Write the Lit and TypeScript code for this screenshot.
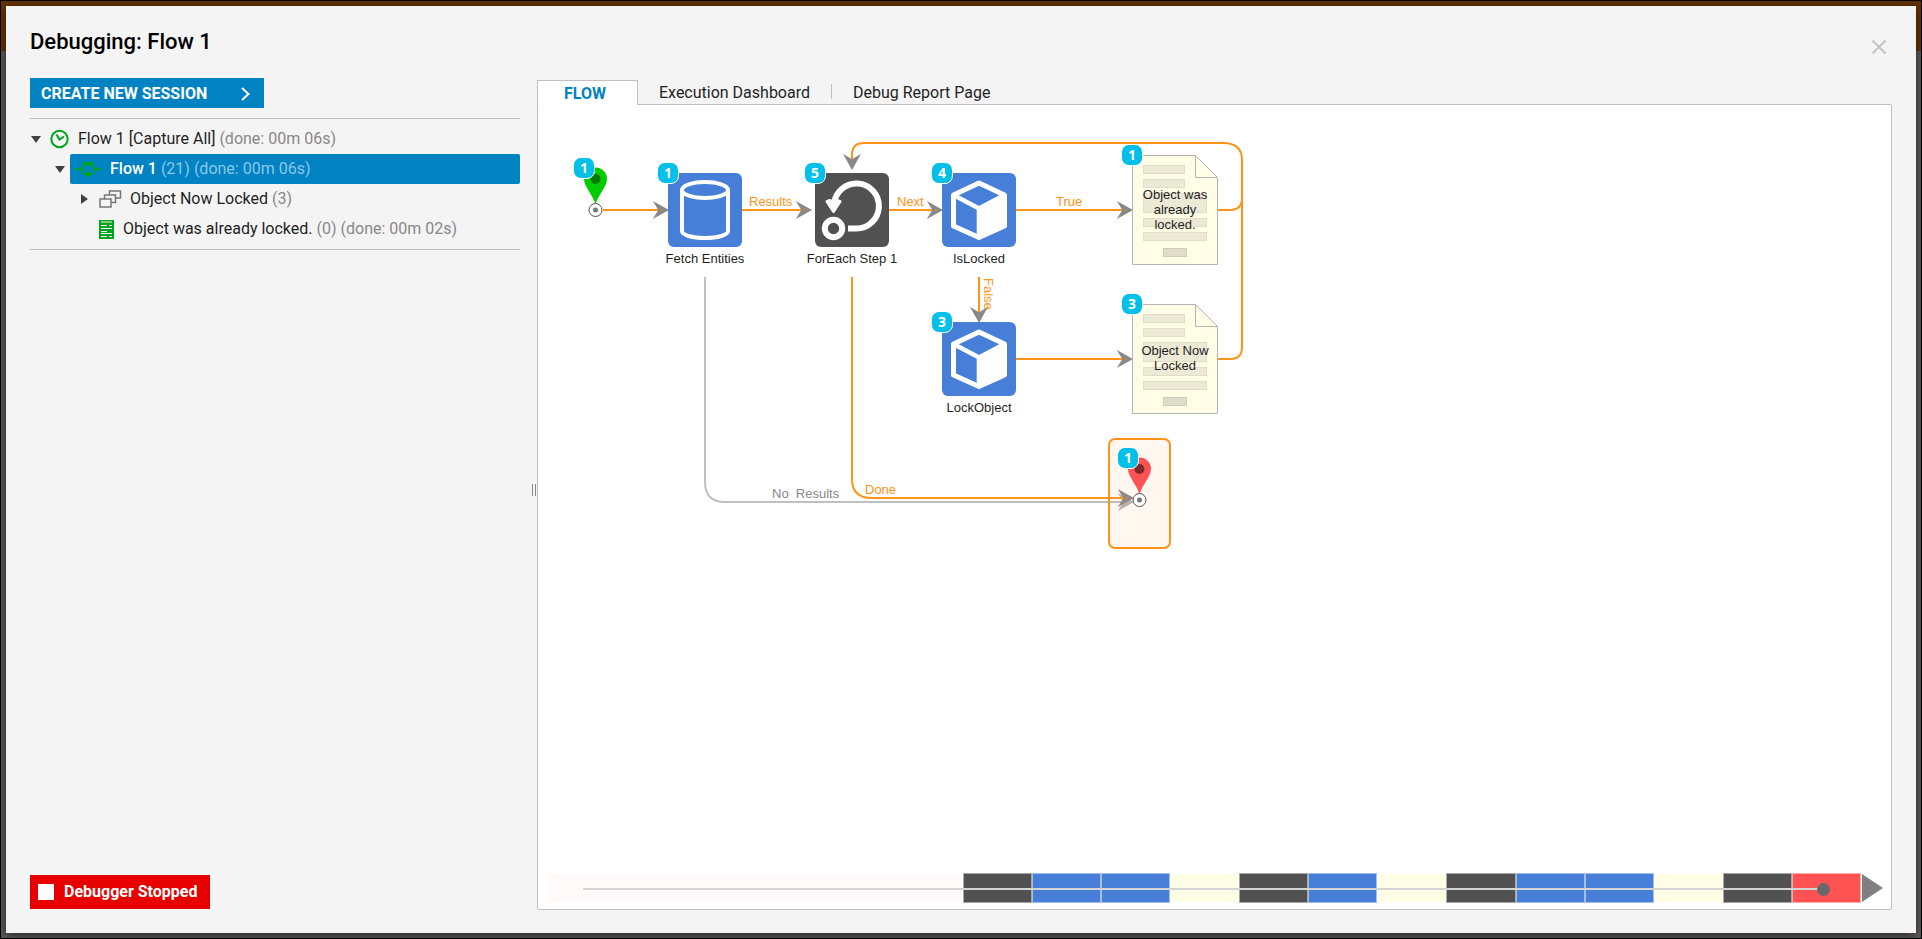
import { LitElement, html, css, svg } from "lit";
import { customElement } from "lit/decorators.js";
import { classMap } from "lit/directives/class-map.js";
import { styleMap } from "lit/directives/style-map.js";

type Kind = "data" | "loop" | "cube" | "form" | "start" | "end";

interface FlowNode {
  kind: Kind;
  x: number;
  y: number;
  label: string;
  runs: number;
}

const nodes: FlowNode[] = [
  { kind: "start", x: 46, y: 62, label: "", runs: 1 },
  { kind: "data", x: 130, y: 68, label: "Fetch Entities", runs: 1 },
  { kind: "loop", x: 277, y: 68, label: "ForEach Step 1", runs: 5 },
  { kind: "cube", x: 404, y: 68, label: "IsLocked", runs: 4 },
  { kind: "cube", x: 404, y: 217, label: "LockObject", runs: 3 },
  { kind: "form", x: 594, y: 50, label: "Object was already locked.", runs: 1 },
  { kind: "form", x: 594, y: 199, label: "Object Now Locked", runs: 3 },
  { kind: "end", x: 570, y: 333, label: "", runs: 1 },
];

const timeline = [
  "idle", "loop", "cube", "cube", "form", "loop", "cube", "form",
  "loop", "cube", "cube", "form", "loop", "stop",
];

const glyph = {
  data: svg`<g fill="none" stroke="#fff" stroke-width="4">
    <ellipse cx="37" cy="17" rx="23" ry="8"/>
    <path d="M14 17V58c0 4 10 7 23 7s23-3 23-7V17"/></g>`,
  loop: svg`<g fill="none" stroke="#fff" stroke-width="6">
    <circle cx="18.5" cy="55.5" r="8.7"/>
    <path d="M33 55.5H41A22.5 22.5 0 1 0 19 31V35"/></g>
    <path d="M12 28.500L18.500 38.500 25 28.500 22 27.500 18.500 30 15 27.500Z" fill="#fff" stroke="#fff" stroke-width="3" stroke-linejoin="round"/>`,
  cube: svg`<path d="M37 10L62.500 22V53L37 64.500 11.500 53V22Z" fill="none" stroke="#fff" stroke-width="5" stroke-linejoin="round"/>
    <path d="M37 36L62.500 22V53L37 64.500Z" fill="#fff"/>
    <path d="M11.500 22L37 35.500 62.500 22M37 35.500V64" fill="none" stroke="#fff" stroke-width="4.600"/>`,
};

@customElement("app-root")
export class AppRoot extends LitElement {
  static styles = css`
    :host {
      display: flex;
      box-sizing: border-box;
      height: 100vh;
      padding: 5px;
      border: 1px solid #000;
      background: linear-gradient(#663300 0 50px, #5c5a5a 50px);
      font-family: Roboto, sans-serif;
      font-size: 16px;
      line-height: 20px;
      color: #1f1f1f;
    }
    * { box-sizing: border-box; }
    button { font: inherit; border: 0; cursor: pointer; }
    svg { display: block; overflow: visible; }
    .dialog {
      flex: 1;
      min-width: 0;
      display: flex;
      flex-direction: column;
      padding: 0 24px 23px;
      background: #f4f4f4;
      box-shadow: 0 2px 10px rgba(0, 0, 0, 0.6);
    }
    header {
      display: flex;
      justify-content: space-between;
      height: 72px;
    }
    h1 {
      margin: 0;
      padding-top: 21px;
      font-size: 22px;
      line-height: 30px;
      font-weight: 500;
      color: #000;
    }
    .close {
      align-self: flex-start;
      margin-top: 31px;
      padding: 3px;
      margin-right: 3px;
      background: none;
    }
    .body { flex: 1; min-height: 0; display: flex; }
    aside {
      width: 490px;
      display: flex;
      flex-direction: column;
    }
    .create {
      align-self: flex-start;
      display: flex;
      align-items: center;
      justify-content: space-between;
      width: 234px;
      height: 30px;
      margin-top: 0;
      padding: 1px 14px 0 11px;
      background: #0082c3;
      color: #fff;
      font-weight: 700;
    }
    .tree {
      list-style: none;
      margin: 10px 0 0;
      padding: 5px 0;
      border: solid #c0c0c0;
      border-width: 1px 0;
      white-space: nowrap;
    }
    .row { display: flex; align-items: center; height: 30px; }
    .twisty { width: 12px; padding: 0; background: none; }
    .item { display: flex; align-items: center; height: 30px; flex: 1; gap: 9px; }
    .item svg { flex: none; }
    .note { color: #888; }
    .d0 .item { padding-left: 8px; }
    .d1 { padding-left: 24px; }
    .d1 .item {
      margin-left: 4px;
      padding-left: 5px;
      border-radius: 2px;
      background: #0082c3;
      color: #fff;
      font-weight: 500;
    }
    .d1 .note { color: #8cc8e8; font-weight: 400; }
    .d2 { padding-left: 48px; }
    .d2 .item { padding-left: 9px; }
    .d3 { padding-left: 60px; }
    .d3 .item { padding-left: 9px; }
    .stopped {
      align-self: flex-start;
      display: flex;
      align-items: center;
      gap: 10px;
      margin: auto 0 1px;
      height: 34px;
      padding: 0 12px 0 8px;
      background: #e60000;
      color: #fff;
      font-weight: 700;
    }
    .square { width: 16px; height: 16px; background: #fff; }
    .splitter {
      width: 17px;
      padding: 0 0 8px 10px;
      display: flex;
      align-items: center;
      justify-content: center;
      gap: 2px;
    }
    .splitter i { width: 1px; height: 12px; background: #888; }
    main { flex: 1; min-width: 0; display: flex; flex-direction: column; margin-top: 2px; }
    nav { display: flex; height: 25px; margin-bottom: -1px; z-index: 1; }
    nav a { color: inherit; text-decoration: none; line-height: 26px; padding: 0 21px; }
    nav .on {
      width: 101px;
      padding: 0 0 0 26px;
      border: 1px solid #c0c0c0;
      border-bottom: 0;
      background: #fff;
      color: #0082c3;
      font-weight: 700;
    }
    nav .bar { width: 1px; height: 15px; margin-top: 4px; background: #c0c0c0; }
    .pane {
      flex: 1;
      min-height: 0;
      display: flex;
      flex-direction: column;
      border: 1px solid #c0c0c0;
      border-radius: 2px;
      background: #fff;
    }
    .canvas {
      flex: 1;
      position: relative;
      overflow: hidden;
      font-family: "Liberation Sans", Arial, sans-serif;
      font-size: 13px;
      line-height: 15px;
    }
    .edges { position: absolute; left: 0; top: 0; width: 100%; height: 100%; }
    .edge { fill: none; stroke: #ff9318; stroke-width: 2; }
    .edge.off { stroke: #c0c0c0; }
    .head { fill: #ff9318; stroke: #888; stroke-width: 3; }
    .head.off { fill: #b4b4b4; stroke: #b4b4b4; }
    .wire { fill: #ff9318; }
    .wire.off { fill: #888; }
    .node { position: absolute; }
    .label {
      position: absolute;
      top: 78px;
      left: 50%;
      transform: translateX(-50%);
      white-space: nowrap;
      color: #1f1f1f;
    }
    .data, .cube, .loop { width: 74px; height: 74px; border-radius: 6px; background: #467ed8; }
    .loop { background: #515151; }
    .form { width: 86px; height: 110px; }
    .form .label {
      inset: 0;
      transform: none;
      display: flex;
      align-items: center;
      padding: 0 6px 2px;
      text-align: center;
      white-space: normal;
    }
    .start { width: 23px; height: 50px; }
    .end {
      width: 63px;
      height: 111px;
      border: 2px solid #ff9318;
      border-radius: 7px;
      background: rgba(255, 147, 60, 0.08);
    }
    .end svg { margin: 17px 0 0 18px; }
    .badge {
      position: absolute;
      left: -11px;
      top: -11px;
      width: 22px;
      height: 22px;
      border: 1px solid #fff;
      border-radius: 8px;
      background: #00bfe8;
      color: #fff;
      font: 700 14px/19px "Noto Sans", sans-serif;
      text-align: center;
    }
    .start .badge { top: -10px; }
    .end .badge { left: 7px; top: 7px; }
    .timeline { display: flex; height: 30px; margin: 0 8px 6px 10px; position: relative; }
    .seg { flex: 1; box-shadow: inset 0 0 0 1px rgba(255, 255, 255, 0.5); }
    .idle-seg { flex: 6; background: #fffafa; }
    .cube-seg { background: #467ed8; }
    .loop-seg { background: #515151; }
    .form-seg { background: #fffde6; }
    .stop-seg { background: #ff5353; }
    .track { position: absolute; left: 35px; right: 59px; top: 15px; height: 2px; background: #d4d4d4; }
    .knob { position: absolute; right: -6px; top: -5px; width: 13px; height: 13px; border-radius: 50%; background: #686868; }
    .play { display: flex; align-items: center; padding: 0 0 0 1px; background: none; }
  `;

  private arrow(x: number, y: number, turn = 0, off = false) {
    return svg`<path class=${classMap({ head: true, off })} transform="translate(${x} ${y}) rotate(${turn})"
      d="M-3 0L-12 -5 -9 0 -12 5Z"/>`;
  }

  private pin(color: string, core: string) {
    return svg`<path d="M11.500 38C10 29 0 20 0 12a11.500 11.500 0 0 1 23 0C23 20 13 29 11.500 38Z" fill=${color}/>
      <circle cx="11.500" cy="12" r="5" fill=${core}/>
      <circle cx="11.500" cy="43" r="6.500" fill="#fff" stroke="#555"/>
      <circle cx="11.500" cy="43" r="2.500" fill="#777"/>`;
  }

  private art(kind: Kind) {
    if (kind === "start") return html`<svg width="23" height="50">${this.pin("#00cc00", "#007a00")}</svg>`;
    if (kind === "end") return html`<svg width="23" height="50">${this.pin("#ff5353", "#802929")}</svg>`;
    if (kind === "form")
      return html`<svg width="86" height="110">
        <path d="M.5 .5H63.500L85.500 22.500V109.500H.5Z" fill="#fffde6" stroke="#b4b4b4"/>
        <path d="M63.500 .5V22.500H85.500" fill="none" stroke="#b4b4b4"/>
        <g fill="#ecead6" stroke="#e0dec8">
          <rect x="11.500" y="10.500" width="41" height="8"/>
          <rect x="11.500" y="24.500" width="41" height="8"/>
          <rect x="11.500" y="38.500" width="63" height="19"/>
          <rect x="11.500" y="63.500" width="63" height="8"/>
          <rect x="11.500" y="77.500" width="63" height="8"/>
          <rect x="31.500" y="93.500" width="23" height="8" fill="#dfddca" stroke="#cfcdbb"/>
        </g></svg>`;
    return html`<svg width="74" height="74">${glyph[kind]}</svg>`;
  }

  private node(n: FlowNode) {
    return html`<div class="node ${n.kind}" style=${styleMap({ left: `${n.x}px`, top: `${n.y}px` })}>
      ${this.art(n.kind)}
      ${n.label ? html`<div class="label">${n.label}</div>` : ""}
      <div class="badge">${n.runs}</div>
    </div>`;
  }

  private edges() {
    return svg`
      <path class="edge off" d="M167 172V377Q167 397 187 397H586"/>
      ${this.arrow(596, 397, 0, true)}
      <path class="edge" d="M65 105H121M204 105H264M351 105H395M478 105H585M478 254H585M441 172V210"/>
      <path class="edge" d="M680 105H692Q704 105 704 93M680 254H692Q704 254 704 242V55Q704 38 685 38H326Q314 38 314 50V56"/>
      <path class="edge" d="M314 172V374Q314 393 334 393H586"/>
      ${this.arrow(131, 105)}${this.arrow(274, 105)}${this.arrow(405, 105)}
      ${this.arrow(595, 105)}${this.arrow(595, 254)}${this.arrow(596, 393)}
      ${this.arrow(314, 65, 90)}${this.arrow(441, 218, 90)}
      <text class="wire" x="211" y="101">Results</text>
      <text class="wire" x="359" y="101">Next</text>
      <text class="wire" x="518" y="101">True</text>
      <text class="wire" x="327" y="389">Done</text>
      <text class="wire off" x="234" y="393">No&nbsp; Results</text>
      <text class="wire" transform="translate(446 173) rotate(90)">False</text>`;
  }

  private twisty(open: boolean, name: string) {
    return html`<button class="twisty" aria-label="Toggle ${name}"><svg width="12" height="12" fill="#404040">
      <path d=${open ? "M1 3H11L6 10Z" : "M3 1V11L10 6Z"}/></svg></button>`;
  }

  render() {
    return html`<section class="dialog" role="dialog" aria-labelledby="title">
      <header>
        <h1 id="title">Debugging: Flow 1</h1>
        <button class="close" aria-label="Close"><svg width="14" height="14" stroke="#c4c4c4" stroke-width="2">
          <path d="M.5 .5L13.500 13.500M13.500 .5L.5 13.500"/></svg></button>
      </header>
      <div class="body">
        <aside>
          <button class="create">CREATE NEW SESSION
            <svg width="9" height="14" fill="none" stroke="#fff" stroke-width="2"><path d="M1 1L7.500 7 1 13"/></svg>
          </button>
          <ul class="tree">
            <li class="row d0">${this.twisty(true, "session")}
              <span class="item">
                <svg width="19" height="19" fill="none" stroke="#00a51b" stroke-width="2"><circle cx="9.500" cy="9" r="8.200"/><path d="M6.500 4.500L9.500 9.500L14 6.500"/></svg>
                <span>Flow 1 [Capture All] <span class="note">(done: 00m 06s)</span></span>
              </span></li>
            <li class="row d1">${this.twisty(true, "flow")}
              <span class="item">
                <svg width="26" height="16" fill="#00a51b"><path d="M6.500 8V12.500H19.500V8M6.500 8L10 3H16L19.500 8M0 8H6M20 8H26" fill="none" stroke="#00a51b"/>
                  <circle cx="1.500" cy="8" r="1.500"/><circle cx="6.500" cy="8" r="2"/><circle cx="10.500" cy="3" r="2.500"/><circle cx="16" cy="3" r="2.500"/><circle cx="20" cy="8" r="2"/><circle cx="24.500" cy="8" r="1.500"/><ellipse cx="13" cy="13" rx="3.500" ry="2.500"/></svg>
                <span>Flow 1 <span class="note">(21) (done: 00m 06s)</span></span>
              </span></li>
            <li class="row d2">${this.twisty(false, "locked objects")}
              <span class="item">
                <svg width="22" height="18" fill="none" stroke="#777" stroke-width="1.500"><rect x="1" y="9" width="11" height="8"/><path d="M5.500 9V5H16.500V12.500H12M10.500 5V1H21.500V8H16.500"/></svg>
                <span>Object Now Locked <span class="note">(3)</span></span>
              </span></li>
            <li class="row d3">
              <span class="item">
                <svg width="15" height="19"><path d="M0 0H15V19H0Z" fill="#00a51b"/><path d="M2 2H13M2 5.500H8M2 8.500H13M2 11.500H8M2 13.500H13M2 16.500H8M10 16.500H13M10 5.500H13" stroke="#f4f4f4" stroke-width="1.200"/></svg>
                <span>Object was already locked. <span class="note">(0) (done: 00m 02s)</span></span>
              </span></li>
          </ul>
          <button class="stopped"><span class="square"></span>Debugger Stopped</button>
        </aside>
        <div class="splitter"><i></i><i></i></div>
        <main>
          <nav>
            <a class="on" href="#flow">FLOW</a>
            <a href="#dashboard">Execution Dashboard</a>
            <span class="bar"></span>
            <a href="#report">Debug Report Page</a>
          </nav>
          <div class="pane">
            <div class="canvas">
              <svg class="edges">${this.edges()}</svg>
              ${nodes.map((n) => this.node(n))}
            </div>
            <div class="timeline">
              ${timeline.map((k) => html`<span class="seg ${k}-seg"></span>`)}
              <button class="play" aria-label="Play"><svg width="21" height="28" fill="#808080"><path d="M0 0L21 14 0 28Z"/></svg></button>
              <div class="track"><span class="knob"></span></div>
            </div>
          </div>
        </main>
      </div>
    </section>`;
  }
}
